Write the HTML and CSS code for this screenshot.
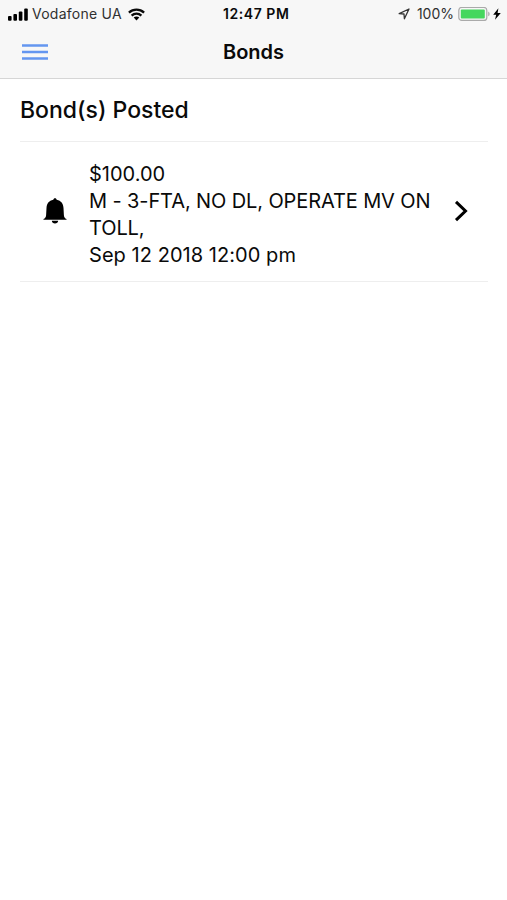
FILE: index.html
```html
<!DOCTYPE html>
<html lang="en">
<head>
<meta charset="utf-8">
<title>Bonds</title>
<link rel="stylesheet" href="styles.css">
</head>
<body>
<header class="header">
  <div class="status">
    <div class="status-left">
      <svg class="signal" width="20" height="13" viewBox="0 0 20 13"><rect x="0" y="8" width="3.6" height="4.8" rx="1"/><rect x="5.4" y="6" width="3.6" height="6.8" rx="1"/><rect x="10.8" y="3.4" width="3.6" height="9.4" rx="1"/><rect x="16.2" y="0.6" width="3.6" height="12.2" rx="1"/></svg>
      <span class="carrier">Vodafone UA</span>
      <svg class="wifi" width="17" height="13" viewBox="0 0 17 13"><g fill="none" stroke="#0a0a0a" stroke-width="2.3"><path d="M.9 4.700C5.200.7 11.800.7 16.100 4.700"/><path d="M3.600 7.700C6.400 5 10.600 5 13.400 7.700"/></g><path d="M5.700 9.600C7.300 8.200 9.700 8.200 11.300 9.600L8.500 12.600Z"/></svg>
    </div>
    <div class="clock">12:47 PM</div>
    <div class="status-right">
      <svg class="location" width="12" height="12" viewBox="0 0 12 12"><path d="M11 1 1.200 5.600 6 6 6.400 10.800Z" fill="none" stroke="#333" stroke-width="1.300" stroke-linejoin="round"/></svg>
      <span class="percent">100%</span>
      <svg class="battery" width="32" height="15" viewBox="0 0 32 15"><rect x=".8" y=".4" width="28" height="13" rx="3" fill="#f7f7f7" stroke="#aaa" stroke-width="1.2"/><rect x="2.8" y="2.4" width="24" height="9" rx="1" fill="#45d75e"/><path d="M30.200 4.600q1.500.7 1.500 2.300t-1.500 2.300Z" fill="#aaa"/></svg>
      <svg class="bolt" width="8" height="12" viewBox="0 0 8 12"><path d="M5.400.2.2 6.800h3L2 11.800 7.800 5H4.600Z"/></svg>
    </div>
  </div>
  <nav class="navbar">
    <svg class="menu" width="26" height="16" viewBox="0 0 26 16"><path d="M0 1.500h26M0 8h26M0 14.500h26" stroke="#6496f0" stroke-width="2.3"/></svg>
    <h1 class="title">Bonds</h1>
  </nav>
</header>
<main class="content">
  <h2 class="heading">Bond(s) Posted</h2>
  <article class="bond">
    <svg class="bell" width="24" height="27" viewBox="0 0 24 27"><path d="M12 .2c1 0 1.500.6 1.700 1.500 4.500.9 6.600 4 6.800 8.300l.4 7.200c.1 1.900.9 3 2.600 3.800v.8H.5V21c1.700-.8 2.500-1.900 2.600-3.800l.4-7.200c.2-4.300 2.300-7.400 6.800-8.300C10.500.8 11 .2 12 .2ZM8.800 22.700h6.400c-.2 1.700-1.400 2.700-3.200 2.700s-3-1-3.200-2.700Z"/></svg>
    <div class="details">
      <p class="amount">$100.00</p>
      <p class="charge">M - 3-FTA, NO DL, OPERATE MV ON<br>TOLL,</p>
      <p class="date">Sep 12 2018 12:00 pm</p>
    </div>
    <svg class="chevron" width="15" height="22" viewBox="0 0 15 22"><path d="M2 1.800 11.500 11 2 20.200" fill="none" stroke="#000" stroke-width="3"/></svg>
  </article>
</main>
</body>
</html>
```
FILE: styles.css
```css
* { box-sizing: border-box; margin: 0; padding: 0; }
body { height: 900px; background: #fff; color: #0a0a0a; font-family: Inter, "Liberation Sans", sans-serif; overflow: hidden; }
svg { display: block; flex: none; }
.header { height: 79px; background: #f7f7f7; border-bottom: 1px solid #d6d6d6; }
.status { display: grid; grid-template-columns: 215px auto 1fr; height: 28px; align-items: center; padding: 0 6px 0 8px; font-size: 14px; line-height: 20px; white-space: nowrap; }
.status-left, .status-right { display: flex; align-items: center; }
.status-right { justify-content: flex-end; }
.carrier { margin: 0 6px 0 4px; color: #303030; letter-spacing: 0.25px; }
.clock { font-weight: 600; letter-spacing: 0.55px; }
.percent { margin: 0 4px 0 7px; color: #303030; }
.bolt { margin-left: 3px; }
.navbar { display: grid; grid-template-columns: 1fr auto 1fr; align-items: center; height: 48px; padding: 0 22px; }
.title { font-size: 20px; line-height: 26px; font-weight: 600; }
.content { padding: 0 19px 0 20px; }
.heading { height: 63px; border-bottom: 1px solid #eee; font-size: 23px; font-weight: 500; line-height: 62px; }
.bond { display: flex; align-items: center; height: 140px; padding: 0 19px 0 23px; border-bottom: 1px solid #eee; }
.details { flex: 1; margin: 7px 0 0 22px; font-size: 20px; line-height: 27px; white-space: nowrap; }
.charge { letter-spacing: -0.11px; }
.date { letter-spacing: 0.05px; }
.chevron { margin-bottom: 2px; }
```
